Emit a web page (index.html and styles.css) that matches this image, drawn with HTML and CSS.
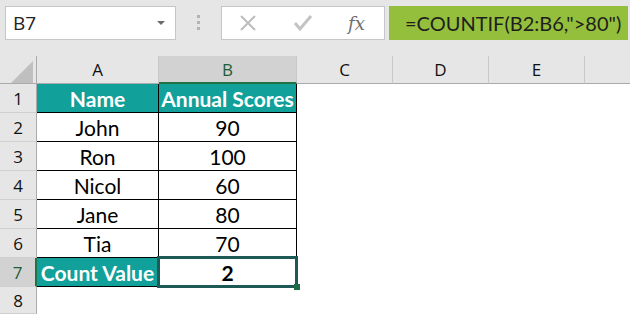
FILE: index.html
```html
<!DOCTYPE html>
<html lang="en">
<head>
  <meta charset="UTF-8">
  <title>COUNTIF - Count Value</title>
  <link rel="stylesheet" href="styles.css">
</head>
<body>
  <div class="topbar">
    <div class="namebox">
      <span>B7</span>
      <svg class="caret" width="8" height="4" viewBox="0 0 8 4"><path d="M0 0h8L4 4z" fill="#6b6b6b"/></svg>
    </div>
    <div class="grip"><i></i><i></i><i></i></div>
    <div class="fbuttons">
      <svg width="18" height="18" viewBox="0 0 18 18"><path d="M2 2L16 16M16 2L2 16" stroke="#bdbdbd" stroke-width="2" fill="none"/></svg>
      <svg width="20" height="18" viewBox="0 0 20 18"><path d="M2 9l5 6L18 2" stroke="#c3c3c3" stroke-width="3" fill="none"/></svg>
      <span class="fx">fx</span>
    </div>
    <div class="formula">=COUNTIF(B2:B6,"&gt;80")</div>
  </div>

  <div class="sheet">
    <div class="corner"><svg width="22" height="22" viewBox="0 0 22 22"><path d="M22 0V22H0z" fill="#bfbfbf"/></svg></div>
    <div class="colhead">A</div>
    <div class="colhead sel">B</div>
    <div class="colhead">C</div>
    <div class="colhead">D</div>
    <div class="colhead">E</div>
    <div class="colhead last"></div>

    <div class="rowhead">1</div>
    <div class="cell head">Name</div>
    <div class="cell head">Annual Scores</div>
    <div class="empty"></div>

    <div class="rowhead">2</div>
    <div class="cell">John</div>
    <div class="cell">90</div>
    <div class="empty"></div>

    <div class="rowhead">3</div>
    <div class="cell">Ron</div>
    <div class="cell">100</div>
    <div class="empty"></div>

    <div class="rowhead">4</div>
    <div class="cell">Nicol</div>
    <div class="cell">60</div>
    <div class="empty"></div>

    <div class="rowhead">5</div>
    <div class="cell">Jane</div>
    <div class="cell">80</div>
    <div class="empty"></div>

    <div class="rowhead">6</div>
    <div class="cell">Tia</div>
    <div class="cell">70</div>
    <div class="empty"></div>

    <div class="rowhead sel">7</div>
    <div class="cell head">Count Value</div>
    <div class="cell active">2</div>
    <div class="empty"></div>

    <div class="rowhead">8</div>
    <div class="empty wide"></div>
  </div>
</body>
</html>
```

FILE: styles.css
```css
body {
  margin: 0;
  width: 630px;
  height: 314px;
  overflow: hidden;
  background: #fff;
  font-family: "Open Sans", sans-serif;
}

/* formula bar */
.topbar {
  display: flex;
  align-items: flex-start;
  height: 56px;
  padding: 6px 2px 0 5px;
  box-sizing: border-box;
  background: #e6e6e6;
}
.namebox {
  display: flex;
  flex-shrink: 0;
  align-items: center;
  justify-content: space-between;
  width: 171px;
  height: 34px;
  padding: 0 10px 0 7px;
  box-sizing: border-box;
  background: #fff;
  border: 1px solid #c6c6c6;
  font-size: 19px;
  color: #222;
}
.grip {
  display: flex;
  flex-shrink: 0;
  flex-direction: column;
  align-items: center;
  gap: 3px;
  width: 45px;
  padding-top: 9px;
}
.grip i {
  width: 3px;
  height: 3px;
  background: #b3b3b3;
}
.fbuttons {
  display: flex;
  flex-shrink: 0;
  align-items: center;
  gap: 36px;
  width: 164px;
  height: 34px;
  padding-left: 17px;
  box-sizing: border-box;
  background: #fff;
  border: 1px solid #c6c6c6;
}
.fx {
  margin-left: -1px;
  font-family: "DejaVu Serif", serif;
  font-style: italic;
  font-size: 18px;
  color: #6e6e6e;
}
.formula {
  flex: 1;
  min-width: 0;
  height: 34px;
  margin-left: 4px;
  padding-left: 16px;
  box-sizing: border-box;
  overflow: hidden;
  white-space: nowrap;
  background: #93bf3c;
  font-family: "Lato", sans-serif;
  font-size: 20px;
  line-height: 34px;
  color: #1e1e1e;
}

/* grid */
.sheet {
  display: grid;
  grid-template-columns: 37px 122px 138px 96px 96px 96px 1fr;
  grid-template-rows: 28px repeat(7, 29px) 27px;
  font-family: "Lato", sans-serif;
  font-size: 21px;
}
.corner {
  display: flex;
  align-items: flex-end;
  justify-content: flex-end;
  padding: 0 3px 0 0;
  background: #e6e6e6;
  border-right: 1px solid #ababab;
  border-bottom: 1px solid #ababab;
}
.colhead {
  display: flex;
  align-items: center;
  justify-content: center;
  background: #e6e6e6;
  border-right: 1px solid #c8c8c8;
  border-bottom: 1px solid #ababab;
  font-family: "Open Sans", sans-serif;
  font-size: 17px;
  color: #111;
}
.colhead.last { border-right: none; }
.colhead.sel {
  background: #d2d2d2;
  border-bottom: 2px solid #217346;
  color: #1d5c38;
}
.rowhead {
  display: flex;
  align-items: center;
  justify-content: center;
  background: #e6e6e6;
  border-right: 1px solid #ababab;
  border-bottom: 1px solid #d0d0d0;
  font-family: "Open Sans", sans-serif;
  font-size: 17px;
  color: #111;
}
.rowhead.sel {
  background: #d2d2d2;
  border-right: 2px solid #217346;
  color: #1d5c38;
}
.cell {
  display: flex;
  align-items: center;
  justify-content: center;
  border-right: 1px solid #000;
  border-bottom: 1px solid #000;
  color: #000;
}
.cell.head {
  background: #12a09b;
  color: #fff;
  font-weight: bold;
}
.cell.active {
  position: relative;
  font-weight: bold;
}
.cell.active::after {
  content: "";
  position: absolute;
  top: -2px;
  left: -2px;
  right: -2px;
  bottom: -2px;
  border: 3px solid #1d5a56;
}
.cell.active::before {
  content: "";
  position: absolute;
  right: -4px;
  bottom: -4px;
  width: 6px;
  height: 6px;
  background: #1f6b45;
  z-index: 1;
}
.empty { grid-column: span 4; }
.empty.wide { grid-column: span 6; }
```
